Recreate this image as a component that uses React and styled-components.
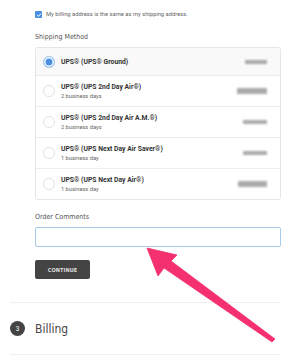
import React from "react";
import styled, { createGlobalStyle } from "styled-components";

const Global = createGlobalStyle`
  html, body { margin: 0; padding: 0; background: #fff; }
  body { font-family: Roboto, "Liberation Sans", sans-serif; color: #333; }
  * { box-sizing: border-box; }
`;

const Page = styled.div`
  position: relative;
  width: 300px;
  height: 361px;
  overflow: hidden;
  padding-left: 10px;
`;

const Section = styled.div`
  width: 271px;
  padding: 11px 0 23px 25px;
  border-bottom: 1px solid #f0f0f0;
  display: flex;
  flex-direction: column;
`;

const CheckRow = styled.label`
  display: flex;
  align-items: center;
  gap: 4px;
  height: 7px;
`;

const CheckBox = styled.span`
  width: 7px;
  height: 7px;
  border-radius: 1px;
  background: #4a90e2;
  display: flex;
  align-items: center;
  justify-content: center;
`;

const CheckText = styled.span`
  font-size: 5.8px;
  color: #666;
  line-height: 7px;
  white-space: nowrap;
`;

const Label = styled.div`
  font-family: "Liberation Sans Narrow", "DejaVu Sans Condensed", Roboto, sans-serif;
  font-size: 7px;
  line-height: 10px;
  color: #555;
  margin-top: ${(p) => p.$mt}px;
`;

const Panel = styled.div`
  margin-top: 5px;
  width: 246px;
  border: 1px solid #e6e6e6;
  border-radius: 3px;
  overflow: hidden;
`;

const Row = styled.div`
  display: flex;
  align-items: center;
  height: ${(p) => (p.$first ? 28 : p.$last ? 30 : 31)}px;
  padding: 0 13px 0 7px;
  background: ${(p) => (p.$selected ? "#f9f9f9" : "#fff")};
  border-bottom: ${(p) => (p.$last ? "none" : "1px solid #ececec")};
`;

const Radio = styled.span`
  width: 12px;
  height: 12px;
  border-radius: 50%;
  flex: none;
  border: 1px solid ${(p) => (p.$on ? "#a9cbf3" : "#e2e2e2")};
  background: ${(p) => (p.$on ? "#4a90e2" : "#fff")};
  box-shadow: ${(p) => (p.$on ? "inset 0 0 0 1.5px #fff" : "none")};
`;

const Info = styled.div`
  display: flex;
  flex-direction: column;
  gap: 2px;
  margin-left: 6px;
  flex: 1;
`;

const Title = styled.div`
  font-size: 6.8px;
  font-weight: 700;
  color: #333;
  line-height: 8px;
  white-space: nowrap;
`;

const Sub = styled.div`
  font-size: 5.7px;
  color: #666;
  line-height: 7px;
`;

const Price = styled.div`
  width: ${(p) => p.$w}px;
  height: ${(p) => p.$h}px;
  background: #8f8f8f;
  filter: blur(0.9px);
  opacity: 0.75;
`;

const Input = styled.div`
  margin-top: 5px;
  width: 246px;
  height: 20px;
  border: 1px solid #a8c8ec;
  border-radius: 2px;
  background: #fff;
`;

const Button = styled.button`
  margin-top: 13px;
  width: 55px;
  height: 19px;
  border: none;
  border-radius: 2px;
  background: #444;
  color: #ddd;
  font-family: "Liberation Sans Narrow", "DejaVu Sans Condensed", Roboto, sans-serif;
  font-size: 5.5px;
  font-weight: 700;
  padding: 0;
  letter-spacing: 0.1px;
`;

const StepRow = styled.div`
  width: 271px;
  height: 52px;
  display: flex;
  align-items: center;
  gap: 10px;
  border-bottom: 1px solid #f0f0f0;
`;

const StepNum = styled.span`
  width: 15px;
  height: 15px;
  border-radius: 50%;
  background: #444;
  color: #fff;
  font-size: 6.5px;
  display: flex;
  align-items: center;
  justify-content: center;
`;

const StepTitle = styled.span`
  font-family: "Liberation Sans Narrow", "DejaVu Sans Condensed", Roboto, sans-serif;
  font-size: 12px;
  color: #444;
`;

const Arrow = styled.svg`
  position: absolute;
  left: 0;
  top: 0;
  pointer-events: none;
`;

const methods = [
  { title: "UPS® (UPS® Ground)", sub: null, pw: 22, ph: 4 },
  { title: "UPS® (UPS 2nd Day Air®)", sub: "2 business days", pw: 30, ph: 6 },
  { title: "UPS® (UPS 2nd Day Air A.M.®)", sub: "2 business days", pw: 24, ph: 4 },
  { title: "UPS® (UPS Next Day Air Saver®)", sub: "1 business day", pw: 24, ph: 4 },
  { title: "UPS® (UPS Next Day Air®)", sub: "1 business day", pw: 29, ph: 6 },
];

export default function App() {
  return (
    <>
      <Global />
      <Page>
        <Section>
          <CheckRow>
            <CheckBox>
              <svg width="6" height="6" viewBox="0 0 6 6">
                <path d="M1 3.1 L2.4 4.4 L5 1.6" fill="none" stroke="#fff" strokeWidth="1" />
              </svg>
            </CheckBox>
            <CheckText>My billing address is the same as my shipping address.</CheckText>
          </CheckRow>
          <Label $mt={14}>Shipping Method</Label>
          <Panel>
            {methods.map((m, i) => (
              <Row
                key={i}
                $first={i === 0}
                $last={i === methods.length - 1}
                $selected={i === 0}
              >
                <Radio $on={i === 0} />
                <Info>
                  <Title>{m.title}</Title>
                  {m.sub && <Sub>{m.sub}</Sub>}
                </Info>
                <Price $w={m.pw} $h={m.ph} />
              </Row>
            ))}
          </Panel>
          <Label $mt={12}>Order Comments</Label>
          <Input />
          <Button>CONTINUE</Button>
        </Section>
        <StepRow>
          <StepNum>3</StepNum>
          <StepTitle>Billing</StepTitle>
        </StepRow>
        <Arrow width="300" height="361" viewBox="0 0 300 361">
          <polygon
            points="147,248 177,255 171,261 275,339 272,342 164,268 158,276"
            fill="#f5306f"
            strokeLinejoin="round"
            stroke="#f5306f"
            strokeWidth="0.8"
          />
        </Arrow>
      </Page>
    </>
  );
}
